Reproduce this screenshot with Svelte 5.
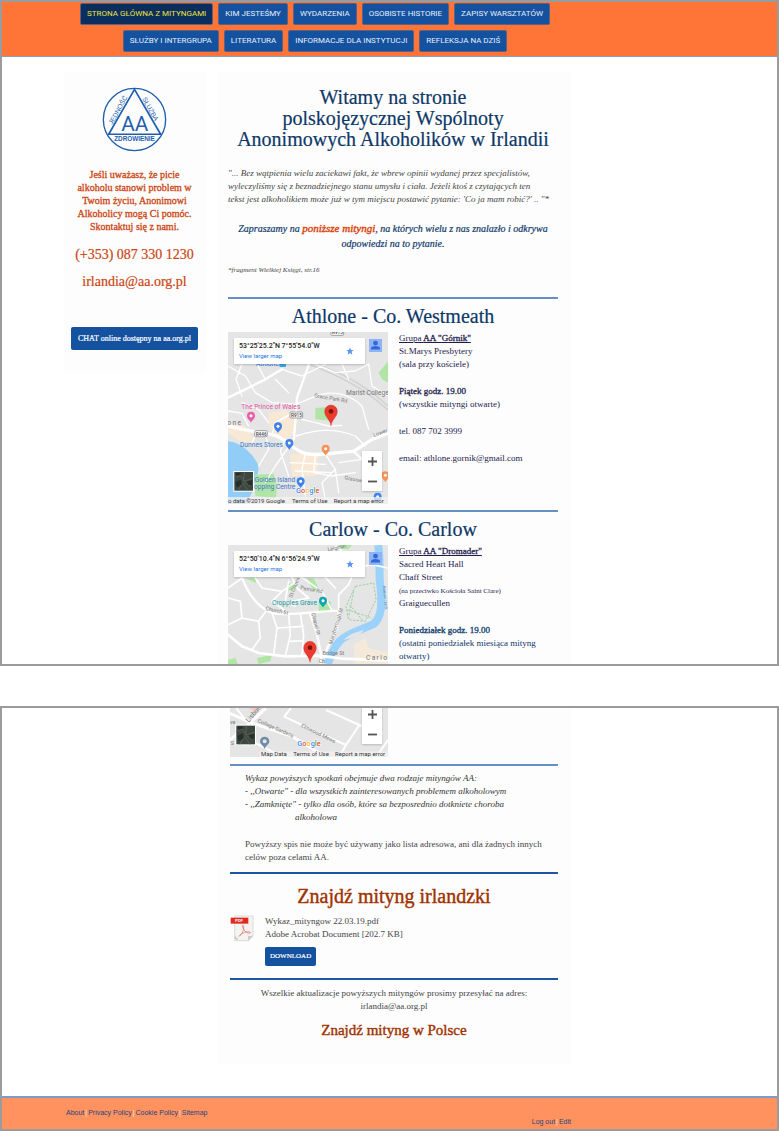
<script>
  const navItems = [
    'STRONA GŁÓWNA Z MITYNGAMI',
    'KIM JESTEŚMY',
    'WYDARZENIA',
    'OSOBISTE HISTORIE',
    'ZAPISY WARSZTATÓW',
    'SŁUŻBY I INTERGRUPA',
    'LITERATURA',
    'INFORMACJE DLA INSTYTUCJI',
    'REFLEKSJA NA DZIŚ'
  ];
  const legal = ['About', 'Privacy Policy', 'Cookie Policy', 'Sitemap'];
  const google = [['G', '#4285f4'], ['o', '#ea4335'], ['o', '#fbbc05'], ['g', '#4285f4'], ['l', '#34a853'], ['e', '#ea4335']];
</script>

{#snippet pin(x, y, color)}
  <path transform="translate({x} {y})" d="M0 17C-3 9-12 6-12-4A12 12 0 0 1 12-4C12 6 3 9 0 17Z" fill={color} />
  <circle cx={x} cy={y - 4} r="4.500" fill="#fff" />
{/snippet}

{#snippet marker(x, y)}
  <path transform="translate({x} {y})" d="M0 0C-2-20-19-26-19-44A19 19 0 0 1 19-44C19-26 2-20 0 0Z" fill="#ea3b2e" stroke="#c5221f" stroke-width="1" />
  <circle cx={x} cy={y - 44} r="7" fill="#7f120c" />
{/snippet}

{#snippet googleMark(x, y)}
  <text {x} {y} class="google">{#each google as [letter, color]}<tspan fill={color}>{letter}</tspan>{/each}</text>
{/snippet}

{#snippet satellite(x, y)}
  <rect {x} {y} width="62" height="62" fill="#fff" />
  <rect x={x + 3} y={y + 3} width="56" height="56" fill="#3d4740" />
  <path transform="translate({x} {y})" d="M3 20 20 14 34 30 59 22M14 59 28 36 44 59M34 3 30 30 50 46" stroke="#56605a" stroke-width="3" fill="none" />
  <path transform="translate({x} {y})" d="M6 34 22 26 26 40 10 50ZM40 32 56 28 56 42 46 42ZM8 6 24 5 20 12 8 15Z" fill="#272f2b" />
{/snippet}

{#snippet placeCard(coords)}
  <div class="place">
    <div>
      <strong>{coords}</strong>
      <a href="#map">View larger map</a>
    </div>
    <svg class="star" viewBox="0 0 24 24" aria-hidden="true"><path d="M12 1 15 9H23L17 14 19 23 12 18 5 23 7 14 1 9H9Z" fill="#5a94ee" /></svg>
  </div>
  <svg class="person" viewBox="0 0 38 38" aria-hidden="true">
    <rect width="38" height="38" fill="#8db4f8" />
    <circle cx="19" cy="12" r="7" fill="#3367d6" />
    <path d="M6 31V27C6 18 32 18 32 27V31Z" fill="#3367d6" />
  </svg>
{/snippet}

{#snippet zoomer()}
  <div class="zoomer">
    <button aria-label="Zoom in"><svg viewBox="0 0 10 10"><path d="M5 0V10M0 5H10" /></svg></button>
    <button aria-label="Zoom out"><svg viewBox="0 0 10 10"><path d="M0 5H10" /></svg></button>
  </div>
{/snippet}

<div class="frame">
  <header>
    <nav class="wrap">
      {#each navItems as item, i}
        <a href="#nav" class:active={i === 0}>{item}</a>
      {/each}
    </nav>
  </header>

  <div class="wrap columns">
    <aside>
      <svg class="logo" viewBox="126 65 194 194" role="img" aria-label="AA">
        <g fill="none" stroke="#1f5fae" stroke-width="4">
          <circle cx="223" cy="162" r="93" />
          <path d="M223 72 301 206H146Z" stroke-width="5" stroke-linejoin="round" />
        </g>
        <g fill="#1f5fae" text-anchor="middle">
          <text x="224" y="197" class="mono">AA</text>
          <text x="223" y="226" class="motto wide">ZDROWIENIE</text>
          <text transform="translate(180 137) rotate(-61)" class="motto">JEDNOŚĆ</text>
          <text transform="translate(264 134) rotate(61)" class="motto">SŁUŻBA</text>
        </g>
      </svg>
      <p class="ask">Jeśli uważasz, że picie alkoholu stanowi problem w Twoim życiu, Anonimowi Alkoholicy mogą Ci pomóc. Skontaktuj się z nami.</p>
      <p class="contact">(+353) 087 330 1230</p>
      <p class="contact">irlandia@aa.org.pl</p>
      <a class="chat" href="#chat">CHAT online dostępny na aa.org.pl</a>
    </aside>

    <main>
      <h1>Witamy na stronie<br />polskojęzycznej Wspólnoty<br />Anonimowych Alkoholików w Irlandii</h1>
      <p class="quote">"... Bez wątpienia wielu zaciekawi fakt, że wbrew opinii wydanej przez specjalistów,<br />wyleczyliśmy się z beznadziejnego stanu umysłu i ciała. Jeżeli ktoś z czytających ten<br />tekst jest alkoholikiem może już w tym miejscu postawić pytanie: 'Co ja mam robić?' .. "*</p>
      <p class="invite">Zapraszamy na <a href="#athlone">poniższe mityngi</a>, na których wielu z nas znalazło i odkrywa odpowiedzi na to pytanie.</p>
      <p class="note">*fragment Wielkiej Księgi, str.16</p>

      <section id="athlone">
        <h2>Athlone - Co. Westmeath</h2>
        <div class="meeting">
          <div class="map">
            <svg class="canvas" viewBox="18 18 480 516" aria-hidden="true">
              <rect x="18" y="18" width="480" height="516" fill="#e5e5e6" />
              <path d="M140 262 190 250 228 280 214 326 160 330 142 300ZM18 290 70 300 100 345 60 350 18 320ZM205 385 290 380 285 450 210 450ZM150 330 205 322 215 370 190 350Z" fill="#f8e9d6" />
              <path d="M18 346C55 350 85 375 105 410C118 435 100 455 95 480C90 505 80 520 70 534H18Z" fill="#92cdf7" />
              <path d="M280 246 324 242 322 284 280 280ZM470 140 498 106V170L480 160ZM98 446 155 443 165 480 162 516 100 510Z" fill="#b0e5a6" />
              <path d="M245 100C330 130 410 160 498 240M255 112C330 142 410 172 498 252" fill="none" stroke="#cfd0d2" stroke-width="4" />
              <g fill="none" stroke="#fff" stroke-linecap="round" stroke-linejoin="round">
                <path stroke-width="10" d="M18 300C60 310 100 318 150 326C195 335 205 370 250 382C300 394 350 375 395 376L450 340 498 322" />
                <path stroke-width="7" d="M262 112 225 215 216 340M395 376 420 400 450 440M18 215 70 190 130 160 180 130" />
                <path stroke-width="4" d="M18 120 70 150 100 200 150 230 222 235M60 114 42 160 60 210M130 160 105 114M180 130 240 150 310 115M222 235 270 215C320 190 380 200 420 240L440 310M222 330C280 310 340 305 400 330L430 360M240 280 280 290 320 300 360 298M105 318 90 350M130 322 140 370 110 420M150 326 160 290 210 262M216 340 160 420 130 470M250 382 240 430 250 510M280 388 275 440 330 450 400 440M310 385 340 430 350 500M18 255 60 262 80 300M190 340 175 375 200 450M340 430 300 470 310 520M420 400 350 410M440 114 450 180 498 210M360 114 380 160M280 114 340 140 400 135 440 114M60 230 110 250 140 290M160 160 200 200M205 410 310 415M220 435 330 440" />
              </g>
              <rect x="327" y="10" width="38" height="18" rx="3" class="shield" />
              <rect x="204" y="258" width="38" height="18" rx="3" class="shield" />
              <rect x="98" y="314" width="38" height="18" rx="3" class="shield" />
              <g class="road small"><text x="330" y="25">R915</text><text x="207" y="273">R915</text><text x="101" y="329">R446</text></g>
              <g class="road">
                <text x="372" y="206" class="big">Marist College</text>
                <text x="16" y="296" class="big" letter-spacing="4">one</text>
                <text transform="translate(276 213) rotate(10)">Grace Park Rd</text>
                <text transform="translate(456 333) rotate(-20)">Lower</text>
                <text transform="translate(367 460) rotate(10)">Grassw</text>
              </g>
              <text x="58" y="248" fill="#e0569f" class="poi">The Prince of Wales</text>
              <text x="54" y="363" fill="#3b78c3" class="poi">Dunnes Stores</text>
              <text x="98" y="469" fill="#3b78c3" class="poi">Golden Island</text>
              <text x="96" y="489" fill="#3b78c3" class="poi">opping Centre</text>
              <text x="102" y="120" fill="#1a73e8" class="poi">Athlone</text>
              <rect x="172" y="106" width="20" height="17" rx="3" fill="#35a8e8" />
              {@render pin(87, 273, '#ea5fa5')}
              {@render pin(168, 305, '#3f83ea')}
              {@render pin(202, 355, '#3f83ea')}
              {@render pin(311, 372, '#f79257')}
              {@render pin(490, 452, '#f79257')}
              {@render pin(236, 470, '#3f83ea')}
              {@render pin(467, 516, '#3f83ea')}
              {@render marker(327, 300)}
              <rect x="18" y="513" width="480" height="21" fill="#f2f2f2" opacity=".75" />
              {@render satellite(34, 435)}
              {@render googleMark(222, 502)}
              <g class="credit"><text x="18" y="530">o data ©2019 Google</text><text x="210" y="530">Terms of Use</text><text x="335" y="530">Report a map error</text></g>
            </svg>
            {@render placeCard('53°25\'25.2"N 7°55\'54.0"W')}
            {@render zoomer()}
          </div>
          <div class="details">
            <p><u>Grupa <b>AA "Górnik"</b></u><br />St.Marys Presbytery<br />(sala przy kościele)</p>
            <p><b>Piątek godz. 19.00</b><br />(wszystkie mityngi otwarte)</p>
            <p>tel. 087 702 3999</p>
            <p>email: athlone.gornik@gmail.com</p>
          </div>
        </div>
      </section>

      <section class="last">
        <h2>Carlow - Co. Carlow</h2>
        <div class="meeting">
          <div class="map">
            <svg class="canvas" viewBox="18 21 480 357" aria-hidden="true">
              <rect x="18" y="21" width="480" height="357" fill="#e5e5e6" />
              <path d="M290 192 326 190 328 220 290 222ZM196 138 215 136 220 152 200 158ZM70 120 105 118 100 135ZM255 120 275 122 290 150 275 160ZM18 365 40 360 48 378H18ZM105 360 150 350 145 370 110 378ZM345 21 390 21 380 34 350 32Z" fill="#b0e5a6" />
              <path d="M395 320 430 300 440 330 498 345V378H400Z" fill="#f5ead9" />
              <path d="M468 21C478 70 468 110 476 150C480 200 480 235 455 258C420 275 375 285 352 310C335 330 325 350 318 378" fill="none" stroke="#9bd2fb" stroke-width="24" />
              <path d="M365 306C385 285 405 282 425 276C415 295 385 300 365 306Z" fill="#e5e5e6" />
              <g fill="none" stroke="#fff" stroke-linecap="round" stroke-linejoin="round">
                <path stroke-width="8" d="M18 290 60 325 110 345 190 355 290 353 360 362 498 368" />
                <path stroke-width="7" d="M60 120C80 170 110 210 150 225C200 235 260 222 350 218M262 222 285 290 298 353 296 378M350 218 345 270 305 353" />
                <path stroke-width="5" d="M240 118 300 160 330 218M240 118 180 160 150 190 200 225M100 120 120 150 180 160M18 150 60 120M210 118 225 150 260 180M285 118 320 60 345 21M345 21 400 90 380 140 350 170 350 218M400 90 450 80 498 90M18 180 55 190 60 240 18 260M60 240 110 250 130 222M110 250 115 300 90 335M150 226 165 270 155 350M200 230 205 290 190 355M235 228 245 290 240 353M165 270 245 265M205 310 245 308M200 130 190 190 220 205M260 180 210 190M310 118 340 150M300 80 340 110 385 110" />
              </g>
              <path d="M400 145 455 135 462 185 430 250 380 245 372 205ZM376 215 450 240M382 200 425 250M395 160 380 235" fill="none" stroke="#7cc184" stroke-width="2" stroke-dasharray="7 4" />
              <g class="road">
                <text transform="translate(130 216) rotate(12)">Church St</text>
                <text transform="translate(268 226) rotate(76)">Chapel St</text>
                <text transform="translate(330 320) rotate(-73)">Maryborough St</text>
                <text transform="translate(210 180) rotate(-68)">St Clares</text>
                <text transform="translate(234 154) rotate(10)">Pairse Rd</text>
                <text transform="translate(318 40) rotate(-12)">Leighlin</text>
                <text transform="translate(482 145) rotate(84)" class="water">Barrow Track</text>
                <text x="302" y="351">Bridge St</text>
                <text x="290" y="376">Ch</text>
                <text x="432" y="366" class="big" letter-spacing="4">Carlow</text>
              </g>
              <text x="150" y="200" fill="#159c9e" class="poi">Croppies Grave</text>
              {@render pin(303, 192, '#12a6b3')}
              {@render marker(264, 373)}
            </svg>
            {@render placeCard('52°50\'10.4"N 6°56\'24.9"W')}
          </div>
          <div class="details">
            <p><u>Grupa <b>AA "Dromader"</b></u><br />Sacred Heart Hall<br />Chaff Street<br /><small>(na przeciwko Kościoła Saint Clare)</small><br />Graiguecullen</p>
            <p class="blue"><b>Poniedziałek godz. 19.00</b><br />(ostatni poniedziałek miesiąca mityng otwarty)</p>
          </div>
        </div>
      </section>
    </main>
  </div>
</div>

<div class="frame">
  <div class="wrap columns lower">
    <main>
      <div class="map">
        <svg class="canvas" viewBox="42 24 474 147" aria-hidden="true">
          <rect x="42" y="24" width="474" height="147" fill="#e5e5e6" />
          <path d="M100 24H135L115 36Z" fill="#f5c9c0" />
          <g fill="none" stroke="#fff" stroke-linejoin="round">
            <path stroke-width="9" d="M42 40 110 70 230 110 330 171M150 24 95 75 42 120" />
            <path stroke-width="6" d="M225 24 205 50 300 95 390 135 430 75 330 30M390 135 370 171M430 75 500 100M120 130 200 171M60 24 90 62M516 120 480 171" />
          </g>
          <g class="road">
            <text transform="translate(98 68) rotate(-50)" class="big">Lisburn</text>
            <text transform="translate(124 66) rotate(24)">College Gardens</text>
            <text transform="translate(254 80) rotate(26)">Elmwood Mews</text>
            <text x="44" y="136">S</text>
            <text x="42" y="72">ve</text>
          </g>
          <path d="M146 147C142 136 132 133 132 124A14 14 0 0 1 160 124C160 133 150 136 146 147Z" fill="#6f8ca8" />
          <circle cx="146" cy="124" r="6" fill="#e5e5e6" />
          <rect x="130" y="154" width="386" height="17" fill="#f2f2f2" opacity=".75" />
          {@render satellite(58, 74)}
          {@render googleMark(244, 139)}
          <g class="credit"><text x="135" y="168">Map Data</text><text x="232" y="168">Terms of Use</text><text x="357" y="168">Report a map error</text></g>
        </svg>
        {@render zoomer()}
      </div>

      <section class="info">
        <p class="kinds"><i>Wykaz powyższych spotkań obejmuje dwa rodzaje mityngów AA:<br />- ,,Otwarte" - dla wszystkich zainteresowanych problemem alkoholowym<br />- ,,Zamknięte" - tylko dla osób, które sa bezposrednio dotkniete choroba<br /><span class="indent">alkoholowa</span></i></p>
        <p>Powyższy spis nie może być używany jako lista adresowa, ani dla żadnych innych celów poza celami AA.</p>
      </section>

      <section class="dark">
        <h2 class="rust">Znajdź mityng irlandzki</h2>
        <div class="file">
          <svg class="pdf" viewBox="40 286 75 81" aria-hidden="true">
            <path d="M54 289H109V350L96 363H54Z" fill="#f3f3f2" stroke="#cfcfcd" stroke-width="2" />
            <path d="M109 348 94 363V350Z" fill="#c9c9c8" />
            <rect x="42" y="294" width="53" height="18" fill="#e02a1f" />
            <text x="55" y="308" class="tag">PDF</text>
            <path d="M68 350C78 340 84 328 80 317C77 314 76 322 82 331C88 339 94 342 101 340C104 337 94 334 84 338C77 340 71 345 67 350" fill="none" stroke="#e8685c" stroke-width="2" />
            <path d="M55 350 58 358H64" fill="none" stroke="#999" stroke-width="2" />
          </svg>
          <div class="meta">
            <p>Wykaz_mityngow 22.03.19.pdf<br />Adobe Acrobat Document [202.7 KB]</p>
            <a class="download" href="#download">DOWNLOAD</a>
          </div>
        </div>
      </section>

      <section class="dark update">
        <p>Wszelkie aktualizacje powyższych mityngów prosimy przesyłać na adres:<br />irlandia@aa.org.pl</p>
        <h3>Znajdź mityng w Polsce</h3>
      </section>
    </main>
  </div>

  <footer>
    <div class="wrap foot">
      <div>{#each legal as item, i}{#if i}<span>|</span>{/if}<a href="#legal">{item}</a>{/each}</div>
      <div class="session"><a href="#logout">Log out</a><span>|</span><a href="#edit">Edit</a></div>
    </div>
  </footer>
</div>

<style>
  :global(body) { background: #fff; }
  .frame, .frame * { box-sizing: border-box; }
  p, h1, h2, h3 { margin: 0; font-weight: 400; }
  a { color: inherit; text-decoration: none; }

  .frame {
    border: 2px solid #9b9b9b;
    font: 9px/13px "Liberation Serif", serif;
    color: #444;
    background: #fff;
  }
  .frame + .frame { margin-top: 40px; }
  .wrap { width: 507px; max-width: 100%; margin-left: 62px; }

  header { background: #ff7538; border-bottom: 1px solid #879fc4; }
  nav { display: flex; flex-wrap: wrap; justify-content: center; row-gap: 5px; padding: 1px 0 4px; }
  nav a {
    margin-right: 5px;
    padding: 0 6px;
    border: 1px solid #5d6080;
    border-radius: 2px;
    background: #1452a0;
    color: #e6eefa;
    font: 8px/20px Roboto, sans-serif;
  }
  nav a.active { background: #0a2f5e; color: #f2e23c; }

  .columns { display: flex; align-items: flex-start; gap: 11px; padding-top: 15px; }
  aside { width: 142px; flex: none; padding: 15px 8px 22px 7px; background: #fdfdfd; text-align: center; }
  .logo { display: block; width: 65px; height: 65px; margin: 0 auto 16px; }
  .mono { font: 62px Roboto, sans-serif; }
  .motto { font: 20px "Liberation Sans", sans-serif; }
  .wide { font-size: 19px; font-weight: 700; }
  .ask { padding: 0 4px; color: #cc4412; font-size: 10px; margin-bottom: 8px; -webkit-text-stroke: 0.3px; }
  .contact { color: #cc4412; font-size: 14px; line-height: 27px; white-space: nowrap; -webkit-text-stroke: 0.2px; }
  .chat {
    display: block;
    margin-top: 32px;
    border-radius: 2px;
    background: #1452a0;
    color: #fff;
    font-size: 8px;
    line-height: 23px;
    white-space: nowrap;
    -webkit-text-stroke: 0.2px;
  }

  main { flex: 1; min-width: 0; padding: 15px 13px 0 11px; background: #fdfdfd; }
  h1, h2 { color: #0d3868; font-size: 20px; text-align: center; -webkit-text-stroke: 0.2px; }
  h1 { line-height: 21px; margin-bottom: 17px; white-space: nowrap; }
  .quote { font-style: italic; white-space: nowrap; }
  .invite { margin: 15px 0 13px; color: #0d3868; font-style: italic; font-size: 10px; line-height: 15px; text-align: center; -webkit-text-stroke: 0.2px; }
  .invite a { color: #d9420b; font-size: 11px; -webkit-text-stroke: 0.4px; }
  .note { font-size: 7px; font-style: italic; margin-bottom: 20px; }

  section { border-top: 2px solid #6590c6; padding-bottom: 6px; }
  section.last { padding-bottom: 0; }
  h2 { line-height: 31px; padding-top: 2px; height: 33px; }
  .meeting { display: flex; gap: 11px; }
  .details { flex: 1; display: flex; flex-direction: column; gap: 14px; color: #241b4d; }
  .details b { font-weight: 400; -webkit-text-stroke: 0.3px; }
  .details small { font-size: 7px; line-height: 12px; }
  .details .blue { color: #0d3868; }

  .map { position: relative; width: 160px; flex: none; font-family: Roboto, sans-serif; }
  .canvas { display: block; width: 100%; }
  .place {
    position: absolute;
    top: 6px;
    left: 6px;
    display: flex;
    justify-content: space-between;
    align-items: center;
    width: 131px;
    height: 26px;
    padding: 0 11px 0 5px;
    background: #fff;
    box-shadow: 0 1px 2px #0003;
    font-size: 6px;
    line-height: 9px;
    color: #222;
  }
  .place strong { display: block; font-size: 7px; font-weight: 500; white-space: nowrap; }
  .place a { color: #1a73e8; }
  .star { width: 8px; height: 8px; }
  .person { position: absolute; top: 7px; right: 6px; width: 13px; height: 13px; }
  .zoomer { position: absolute; right: 6px; bottom: 13px; display: grid; width: 20px; background: #fff; box-shadow: 0 1px 2px #0003; }
  .zoomer button { display: grid; place-items: center; height: 20px; padding: 0; border: 0; background: none; }
  .zoomer svg { width: 9px; height: 9px; }
  .zoomer path { stroke: #555; stroke-width: 2; fill: none; }

  .shield { fill: #fff; stroke: #777; stroke-width: 2; }
  .road { font-size: 16px; fill: #777; }
  .road.small { font-size: 14px; font-weight: 500; fill: #444; }
  .road .big { font-size: 20px; }
  .road .water { fill: #4b8fc4; font-size: 12px; }
  .poi { font-size: 20px; }
  .google { font: 500 22px Roboto, sans-serif; stroke: #fff; stroke-width: 3px; paint-order: stroke; }
  .credit { font-size: 18px; fill: #333; }
  .tag { font: bold 12px "Liberation Sans", sans-serif; fill: #fff; }

  .lower { padding-top: 0; }
  .lower main { margin-left: 154px; padding: 0 13px 24px 12px; }
  .lower .map { width: 158px; margin-bottom: 7px; overflow: hidden; }
  .info { padding: 6px 0 8px 15px; }
  .kinds { color: #333; margin-bottom: 14px; white-space: nowrap; }
  .indent { padding-left: 50px; }
  .dark { border-color: #1d57a4; }
  .rust, h3 { color: #a03200; -webkit-text-stroke: 0.4px; }
  .rust { line-height: 38px; height: 41px; padding-top: 3px; }
  .file { display: flex; gap: 10px; padding-bottom: 6px; }
  .pdf { width: 25px; height: 27px; }
  .meta { display: flex; flex-direction: column; align-items: flex-start; gap: 6px; }
  .download { padding: 0 5px; border-radius: 2px; background: #1452a0; color: #fff; font-size: 7px; line-height: 19px; -webkit-text-stroke: 0.2px; }
  .update { padding: 7px 0 0; text-align: center; }
  h3 { font-size: 15px; line-height: 20px; margin-top: 7px; }

  footer { margin-top: 32px; border-top: 2px solid #7d9bc6; background: #ff925e; font: 7px/9px "Liberation Sans", sans-serif; color: #1d4481; }
  .foot { display: flex; justify-content: space-between; padding: 10px 0 3px 2px; }
  .foot span { padding: 0 1px; color: #ffe0d0; }
  .session { margin-top: 9px; }
</style>
